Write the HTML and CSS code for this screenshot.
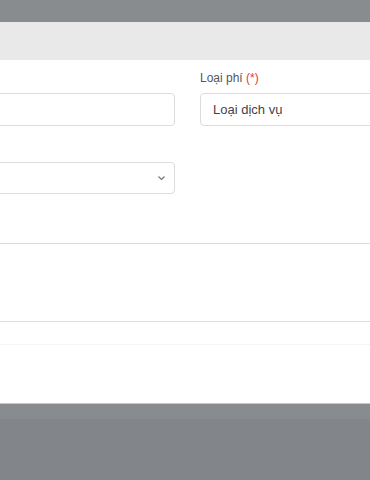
FILE: index.html
```html
<!DOCTYPE html>
<html lang="vi">
<head>
    <meta charset="UTF-8">
    <meta name="viewport" content="width=device-width, initial-scale=1.0">
    <title>Phí dịch vụ</title>
    <link rel="stylesheet" href="styles.css">
</head>
<body>
    <div class="backdrop">
        <div class="modal">
            <div class="modal-header"></div>
            <div class="modal-body">
                <div class="form-grid">
                    <div class="field">
                        <label>&nbsp;</label>
                        <div class="input"></div>
                    </div>
                    <div class="field">
                        <label>Loại phí <span class="req">(*)</span></label>
                        <div class="input">Loại dịch vụ</div>
                    </div>
                    <div class="field">
                        <label>&nbsp;</label>
                        <div class="input select">
                            <svg width="9" height="6" viewBox="0 0 9 6"><path d="M1.5 1.5l3 3 3-3" fill="none" stroke="#777" stroke-width="1.2"/></svg>
                        </div>
                    </div>
                    <div class="field"></div>
                </div>
                <div class="table">
                    <div class="table-head"></div>
                    <div class="table-row"></div>
                </div>
            </div>
            <div class="modal-footer"></div>
        </div>
        <div class="page-footer"></div>
    </div>
</body>
</html>
```

FILE: styles.css
```css
body {
    margin: 0;
    font-family: "Liberation Sans", Arial, sans-serif;
    font-size: 13px;
    color: #444;
    background-color: #828589;
    overflow: hidden;
}
.backdrop {
    padding-top: 22px;
    background-color: #898c8f;
    overflow: hidden;
}
.modal {
    width: 760px;
    margin-left: -180px;
    background-color: #fff;
    border-bottom: 1px solid #c8c8c8;
}
.modal-header {
    height: 38px;
    background-color: #e9e9e9;
}
.modal-body {
    padding-top: 10px;
}
.form-grid {
    display: grid;
    grid-template-columns: 355px 355px;
    column-gap: 25px;
    row-gap: 13px;
}
.field label {
    display: block;
    height: 17px;
    line-height: 17px;
    font-size: 12px;
    color: #555;
    margin-bottom: 6px;
}
.req {
    color: #e53935;
}
.input {
    height: 31px;
    border: 1px solid #dcdcdf;
    border-radius: 4px;
    padding: 0 12px;
    line-height: 31px;
    color: #444;
}
.select {
    height: 30px;
    line-height: 30px;
    display: flex;
    justify-content: flex-end;
    align-items: center;
    padding-right: 8px;
}
.table {
    margin-top: 49px;
}
.table-head {
    height: 77px;
    border-top: 1px solid #dcdcdc;
    border-bottom: 1px solid #dcdcdc;
}
.table-row {
    height: 22px;
    border-bottom: 1px solid #f4f4f4;
}
.modal-footer {
    height: 58px;
}
.page-footer {
    height: 15px;
}
```
